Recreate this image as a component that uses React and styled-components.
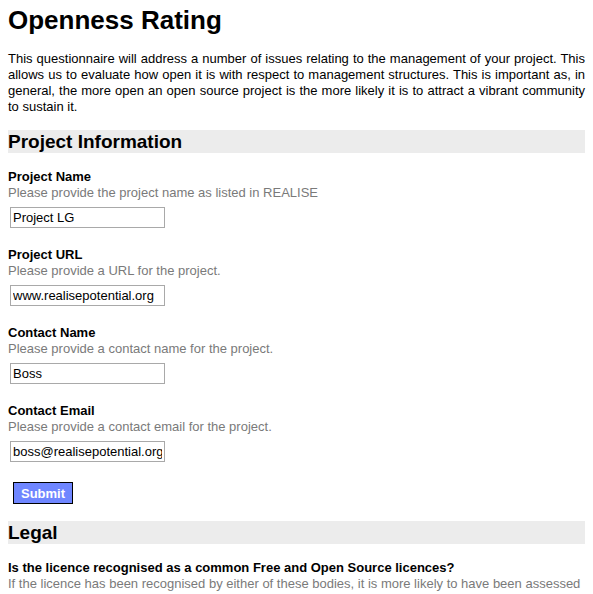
import React from "react";
import styled, { createGlobalStyle } from "styled-components";

const Global = createGlobalStyle`
  html, body { margin: 0; padding: 0; background: #fff; }
  body { font-family: Arial, "Liberation Sans", sans-serif; color: #000; }
`;

const Page = styled.div`
  padding: 7px 8px 0 8px;
  display: flex;
  flex-direction: column;
`;

const Title = styled.h1`
  margin: 0;
  font-size: 26px;
  line-height: 26px;
  font-weight: bold;
`;

const Intro = styled.p`
  margin: 18px 0 0 0;
  font-size: 13px;
  line-height: 16px;
  text-align: justify;
`;

const SectionHeading = styled.h2`
  margin: ${(p) => p.$top}px 0 0 0;
  background: #ececec;
  font-size: 19px;
  line-height: 23px;
  height: 23px;
  font-weight: bold;
`;

const Form = styled.form`
  display: flex;
  flex-direction: column;
  margin-top: 16px;
`;

const Field = styled.div`
  display: flex;
  flex-direction: column;
  align-items: flex-start;
  margin-bottom: 19px;
`;

const Label = styled.label`
  font-size: 13px;
  line-height: 16px;
  font-weight: bold;
`;

const Hint = styled.div`
  font-size: 13px;
  line-height: 16px;
  color: #7a7a7a;
`;

const Input = styled.input`
  box-sizing: border-box;
  margin: 6px 0 0 2px;
  width: 155px;
  height: 21px;
  border: 1px solid #a9a9a9;
  padding: 0 2px;
  font-family: Arial, "Liberation Sans", sans-serif;
  font-size: 13px;
  color: #000;
  background: #fff;
  outline: none;
`;

const SubmitButton = styled.button`
  box-sizing: border-box;
  align-self: flex-start;
  margin: 1px 0 0 5px;
  width: 60px;
  height: 22px;
  padding: 0;
  background: #6f86ff;
  border: 1px solid #000;
  color: #fff;
  font-family: Arial, "Liberation Sans", sans-serif;
  font-size: 13px;
  font-weight: bold;
`;

const Question = styled.div`
  margin-top: 16px;
  display: flex;
  flex-direction: column;
`;

const QHint = styled(Hint)`
  white-space: nowrap;
`;

const fields = [
  { label: "Project Name", hint: "Please provide the project name as listed in REALISE", value: "Project LG" },
  { label: "Project URL", hint: "Please provide a URL for the project.", value: "www.realisepotential.org" },
  { label: "Contact Name", hint: "Please provide a contact name for the project.", value: "Boss" },
  { label: "Contact Email", hint: "Please provide a contact email for the project.", value: "boss@realisepotential.org" },
];

export default function App() {
  return (
    <>
      <Global />
      <Page>
        <Title>Openness Rating</Title>
        <Intro>
          This questionnaire will address a number of issues relating to the management of your project. This
          allows us to evaluate how open it is with respect to management structures. This is important as, in
          general, the more open an open source project is the more likely it is to attract a vibrant community
          to sustain it.
        </Intro>
        <SectionHeading $top={15}>Project Information</SectionHeading>
        <Form onSubmit={(e) => e.preventDefault()}>
          {fields.map((f) => (
            <Field key={f.label}>
              <Label>{f.label}</Label>
              <Hint>{f.hint}</Hint>
              <Input defaultValue={f.value} />
            </Field>
          ))}
          <SubmitButton type="submit">Submit</SubmitButton>
        </Form>
        <SectionHeading $top={17}>Legal</SectionHeading>
        <Question>
          <Label>Is the licence recognised as a common Free and Open Source licences?</Label>
          <QHint>If the licence has been recognised by either of these bodies, it is more likely to have been assessed</QHint>
        </Question>
      </Page>
    </>
  );
}
